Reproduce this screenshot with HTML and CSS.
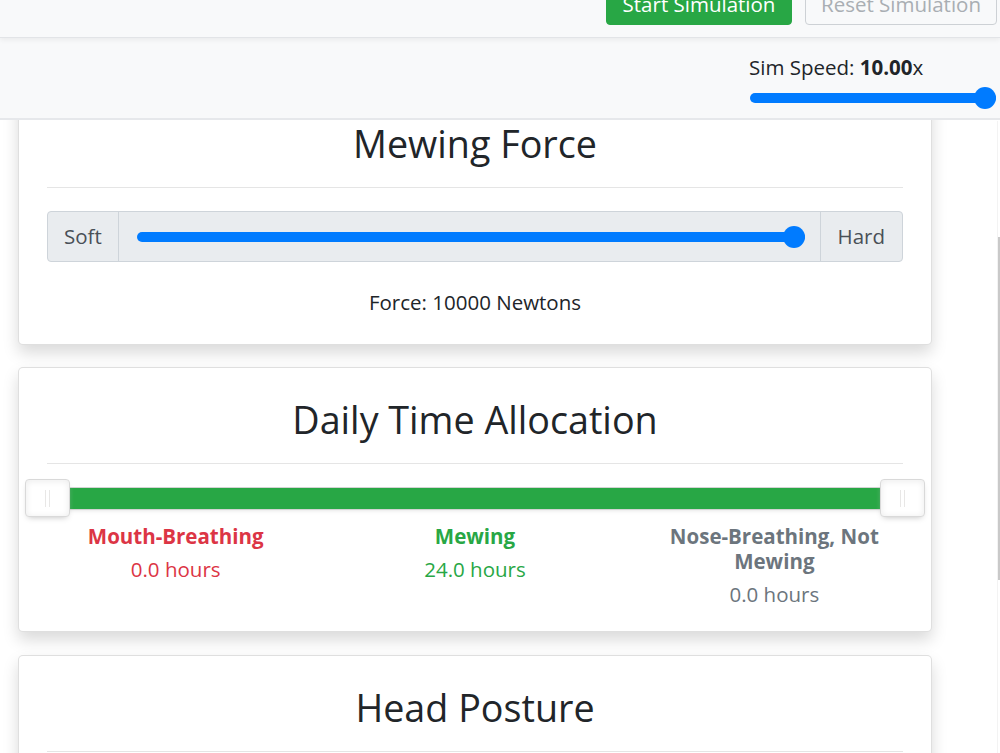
FILE: index.html
```html
<!DOCTYPE html>
<html lang="en">
<head>
  <meta charset="UTF-8">
  <meta name="viewport" content="width=device-width, initial-scale=1">
  <title>Mewing Simulator</title>
  <link rel="stylesheet" href="styles.css">
</head>
<body>
  <!-- fixed controls -->
  <header class="sim-header">
    <div class="toolbar">
      <button class="btn btn-start">Start Simulation</button>
      <button class="btn btn-reset" disabled>Reset Simulation</button>
    </div>
    <div class="speedbar">
      <div class="speed">
        <label for="speed">Sim Speed: <b>10.00</b>x</label>
        <input type="range" id="speed" class="range" min="1" max="10" step="0.01" value="10">
      </div>
    </div>
  </header>

  <main class="panels">
    <!-- force -->
    <section class="card">
      <h1 class="card-title">Mewing Force</h1>
      <hr>
      <div class="input-group">
        <span class="addon">Soft</span>
        <div class="range-box">
          <input type="range" class="range" min="0" max="10000" step="100" value="10000">
        </div>
        <span class="addon">Hard</span>
      </div>
      <p class="readout">Force: 10000 Newtons</p>
    </section>

    <!-- time split -->
    <section class="card">
      <h1 class="card-title">Daily Time Allocation</h1>
      <hr>
      <div class="split">
        <div class="split-connect"></div>
        <div class="split-handle handle-lower"></div>
        <div class="split-handle handle-upper"></div>
      </div>
      <div class="alloc">
        <div class="alloc-col mouth">
          <div class="alloc-name">Mouth-Breathing</div>
          <div class="alloc-hours">0.0 hours</div>
        </div>
        <div class="alloc-col mewing">
          <div class="alloc-name">Mewing</div>
          <div class="alloc-hours">24.0 hours</div>
        </div>
        <div class="alloc-col nose">
          <div class="alloc-name">Nose-Breathing, Not Mewing</div>
          <div class="alloc-hours">0.0 hours</div>
        </div>
      </div>
    </section>

    <!-- posture -->
    <section class="card">
      <h1 class="card-title">Head Posture</h1>
      <hr>
    </section>
  </main>

  <div class="scroll-track"><div class="scroll-thumb"></div></div>
</body>
</html>
```

FILE: styles.css
```css
:root {
  --color-bg:      #ffffff;
  --color-light:   #f8f9fa;
  --color-addon:   #e9ecef;
  --color-border:  #ced4da;
  --color-dark:    #212529;
  --color-muted:   #6c757d;
  --color-primary: #007bff;
  --color-success: #28a745;
  --color-danger:  #dc3545;
  --font-base: "Open Sans", "Noto Sans", Arial, sans-serif;
}
*, *::before, *::after { box-sizing: border-box; }
html { overflow: hidden; }
body {
  margin: 0;
  font-family: var(--font-base);
  font-size: 20.5px;
  line-height: 1.5;
  color: var(--color-dark);
  background: var(--color-bg);
}

/* header */
.sim-header {
  position: fixed; top: 0; left: 0; right: 0;
  z-index: 10;
  background: var(--color-light);
}
.toolbar {
  height: 38px;
  display: flex; justify-content: flex-end; align-items: flex-end;
  gap: 13px;
  padding: 0 3px 12px 0;
  overflow: hidden;
  border-bottom: 1px solid #e2e4e7;
  box-shadow: 0 2px 5px rgba(0,0,0,.06);
  position: relative;
}
.btn {
  flex: none;
  font-family: inherit; font-size: 20.5px; line-height: 30px;
  padding: 8px 0 5px;
  text-align: center;
  white-space: nowrap;
  border-radius: 4px;
  border: 1px solid transparent;
}
.btn-start { width: 186px; background: var(--color-success); color: #fff; border-color: var(--color-success); }
.btn-reset { width: 192px; background: transparent; color: #a9aeb3; border-color: #cdd1d5; }

.speedbar {
  height: 82px;
  display: flex; justify-content: flex-end;
  padding: 14px 3px 0 0;
  border-bottom: 2px solid #e6e8eb;
}
.speed { display: flex; flex-direction: column; width: 247px; }
.speed label { line-height: 30px; margin-left: -1px; }
.speed b { font-weight: 700; }
.speed .range { width: 246px; margin-top: 5px; }

/* range input */
.range {
  -webkit-appearance: none; appearance: none;
  height: 22px; margin: 0; padding: 0;
  background: transparent;
}
.range::-webkit-slider-runnable-track {
  height: 10px; border-radius: 5px; background: var(--color-primary);
}
.range::-webkit-slider-thumb {
  -webkit-appearance: none;
  width: 22px; height: 22px; margin-top: -6px;
  border: none; border-radius: 50%;
  background: var(--color-primary);
}

/* cards */
.panels { width: 914px; margin-left: 18px; padding-top: 91px; }
.card {
  background: #fff;
  border: 1px solid rgba(0,0,0,.125);
  border-radius: 5px;
  box-shadow: 0 .5rem 1rem rgba(0,0,0,.15);
  padding: 28px 28px 27px;
  margin-bottom: 22px;
}
.card:nth-child(2) { padding-bottom: 22px; margin-bottom: 23px; }
.card-title {
  margin: 0;
  font-size: 37.7px; font-weight: 500;
  line-height: 48px;
  text-align: center;
}
.card hr {
  margin: 19px 0 23px;
  border: 0; border-top: 1px solid rgba(0,0,0,.1);
}

/* soft / hard slider */
.input-group {
  display: flex; height: 51px;
  border: 1px solid var(--color-border);
  border-radius: 4px;
  background: var(--color-addon);
}
.addon {
  display: flex; align-items: center;
  padding: 0 16px;
  color: #495057;
}
.input-group .addon:first-child { border-right: 1px solid var(--color-border); }
.input-group .addon:last-child  { border-left: 1px solid var(--color-border); padding: 0 17px; }
.range-box { flex: 1; display: flex; align-items: center; padding: 0 15px 0 18px; }
.range-box .range { width: 100%; }
.readout { margin: 25px 0 0; text-align: center; line-height: 30px; }

/* three-way split slider */
.split {
  position: relative;
  height: 23px;
  border: 1px solid #d3d3d3;
  border-radius: 4px;
  background: #fafafa;
  box-shadow: inset 0 1px 1px #f0f0f0, 0 3px 6px -5px #bbb;
}
.split-connect { height: 100%; background: var(--color-success); }
.split-handle {
  position: absolute; top: -9px;
  width: 45px; height: 38px;
  background: #fff;
  border: 1px solid #d9d9d9;
  border-radius: 4px;
  box-shadow: inset 0 0 1px #fff, inset 0 1px 7px #ebebeb, 0 3px 6px -3px #bbb;
}
.split-handle::before, .split-handle::after {
  content: '';
  position: absolute; top: 10px;
  width: 1px; height: 17px;
  background: #e8e7e6;
}
.split-handle::before { left: 19px; }
.split-handle::after  { left: 23px; }
.handle-lower { left: -23px; }
.handle-upper { right: -23px; }

.alloc {
  display: grid; grid-template-columns: repeat(3, 1fr);
  margin: 14px -21px 0;
  text-align: center;
}
.alloc-col { padding: 0 15px; }
.alloc-name { font-weight: 700; line-height: 25px; margin-bottom: 5px; }
.alloc-hours { line-height: 30px; }
.mouth  { color: var(--color-danger); }
.mewing { color: var(--color-success); }
.nose   { color: var(--color-muted); }

/* overlay scrollbar */
.scroll-track {
  position: fixed; top: 121px; right: 0; bottom: 0;
  width: 3px;
  border-left: 1px solid #f3f3f3;
}
.scroll-thumb {
  margin-top: 116px;
  width: 2px; height: 343px;
  background: #c9c9c9;
}
```
